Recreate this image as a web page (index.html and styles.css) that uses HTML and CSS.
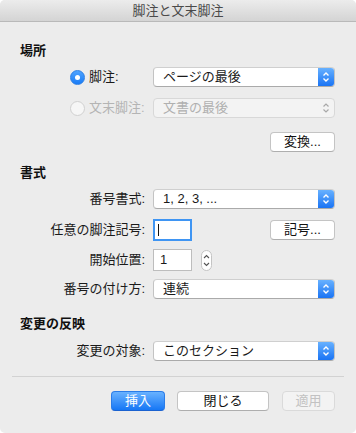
FILE: index.html
```html
<!DOCTYPE html>
<html lang="ja">
<head>
<meta charset="utf-8">
<title>脚注と文末脚注</title>
<link rel="stylesheet" href="styles.css">
</head>
<body>
<div class="window">
  <div class="titlebar">脚注と文末脚注</div>
  <div class="content">
    <h2 class="heading h-place">場所</h2>
    <div class="row r1">
      <div class="label radio-label"><span class="radio on"></span><span>脚注:</span></div>
      <div class="popup"><span class="ptext">ページの最後</span><span class="arrows"><svg width="8" height="12" viewBox="0 0 8 12"><path d="M1.5 4.5 L4 2 L6.5 4.5 M1.5 7.5 L4 10 L6.5 7.5" fill="none" stroke="#fff" stroke-width="1.4"/></svg></span></div>
    </div>
    <div class="row r2">
      <div class="label radio-label disabled"><span class="radio"></span><span>文末脚注:</span></div>
      <div class="popup disabled"><span class="ptext">文書の最後</span><span class="arrows"><svg width="8" height="12" viewBox="0 0 8 12"><path d="M1.5 4.5 L4 2 L6.5 4.5 M1.5 7.5 L4 10 L6.5 7.5" fill="none" stroke="#a8a8a8" stroke-width="1.2"/></svg></span></div>
    </div>
    <div class="row r3">
      <div class="label"></div>
      <div class="right"><button class="btn w65">変換...</button></div>
    </div>

    <h2 class="heading h-format">書式</h2>
    <div class="row r4">
      <div class="label">番号書式:</div>
      <div class="popup"><span class="ptext">1, 2, 3, ...</span><span class="arrows"><svg width="8" height="12" viewBox="0 0 8 12"><path d="M1.5 4.5 L4 2 L6.5 4.5 M1.5 7.5 L4 10 L6.5 7.5" fill="none" stroke="#fff" stroke-width="1.4"/></svg></span></div>
    </div>
    <div class="row r5">
      <div class="label">任意の脚注記号:</div>
      <div class="split">
        <div class="field focus"><span class="caret"></span></div>
        <button class="btn w65">記号...</button>
      </div>
    </div>
    <div class="row r6">
      <div class="label">開始位置:</div>
      <div class="inline">
        <div class="field">1</div>
        <div class="stepper"><svg width="11" height="21" viewBox="0 0 11 21"><path d="M3 8 L5.5 5.5 L8 8 M3 13 L5.5 15.5 L8 13" fill="none" stroke="#555" stroke-width="1.1"/></svg></div>
      </div>
    </div>
    <div class="row r7">
      <div class="label">番号の付け方:</div>
      <div class="popup"><span class="ptext">連続</span><span class="arrows"><svg width="8" height="12" viewBox="0 0 8 12"><path d="M1.5 4.5 L4 2 L6.5 4.5 M1.5 7.5 L4 10 L6.5 7.5" fill="none" stroke="#fff" stroke-width="1.4"/></svg></span></div>
    </div>

    <h2 class="heading h-apply">変更の反映</h2>
    <div class="row r8">
      <div class="label">変更の対象:</div>
      <div class="popup"><span class="ptext">このセクション</span><span class="arrows"><svg width="8" height="12" viewBox="0 0 8 12"><path d="M1.5 4.5 L4 2 L6.5 4.5 M1.5 7.5 L4 10 L6.5 7.5" fill="none" stroke="#fff" stroke-width="1.4"/></svg></span></div>
    </div>

    <div class="separator"></div>

    <div class="actions">
      <button class="btn primary w54">挿入</button>
      <button class="btn w92">閉じる</button>
      <button class="btn disabled-btn w53">適用</button>
    </div>
  </div>
</div>
</body>
</html>
```

FILE: styles.css
```css
* { box-sizing: border-box; }
html, body { margin: 0; padding: 0; background: #ffffff; }
body {
  font-family: "Liberation Sans", "Noto Sans CJK JP", sans-serif;
  font-size: 13px;
  color: #1a1a1a;
}
.window {
  width: 356px;
  height: 433px;
  background: #ececec;
  border-radius: 5px;
  overflow: hidden;
  display: flex;
  flex-direction: column;
}
.titlebar {
  height: 22px;
  line-height: 21px;
  text-align: center;
  color: #4a4a4a;
  font-size: 13px;
  background: linear-gradient(#ececec, #d4d4d4);
  border-bottom: 1px solid #b9b9b9;
  flex: none;
}
.content {
  display: flex;
  flex-direction: column;
  padding-top: 21px;
}
.heading {
  margin: 0;
  padding-left: 20px;
  font-size: 13px;
  font-weight: bold;
  line-height: 16px;
  height: 16px;
  color: #111;
}
.row {
  display: grid;
  grid-template-columns: 125px 182px;
  column-gap: 8px;
  padding-left: 20px;
  height: 20px;
  align-items: center;
}
.label {
  text-align: right;
  line-height: 16px;
  white-space: nowrap;
}
.radio-label {
  display: flex;
  align-items: center;
  justify-content: flex-start;
  padding-left: 50px;
  gap: 4px;
}
.radio-label.disabled { color: #b4b4b4; }
.radio {
  width: 15px;
  height: 15px;
  border-radius: 50%;
  background: #f6f6f6;
  border: 1px solid #d0d0d0;
  flex: none;
  position: relative;
}
.radio.on {
  background: linear-gradient(#4ea3ff, #1a7cf6);
  border: 1px solid #2b7fe6;
}
.radio.on::after {
  content: "";
  position: absolute;
  left: 4px; top: 4px;
  width: 5px; height: 5px;
  border-radius: 50%;
  background: #fff;
}
.popup {
  height: 20px;
  background: #fff;
  border: 1px solid #c3c3c3;
  border-top-color: #cfcfcf;
  border-bottom-color: #aaa;
  border-radius: 4px;
  display: flex;
  align-items: center;
  overflow: hidden;
}
.ptext {
  flex: 1;
  padding-left: 9px;
  line-height: 16px;
  white-space: nowrap;
}
.arrows {
  width: 16px;
  height: 100%;
  background: linear-gradient(#67b1ff, #1a74f4);
  display: flex;
  align-items: center;
  justify-content: center;
  flex: none;
}
.popup.disabled {
  background: #f3f3f3;
  border-color: #d8d8d8;
  color: #b0b0b0;
}
.popup.disabled .arrows { background: transparent; }
.right { display: flex; justify-content: flex-end; }
.btn {
  height: 20px;
  font-family: inherit;
  font-size: 13px;
  line-height: 16px;
  padding: 0;
  color: #111;
  background: #fff;
  border: 1px solid #c4c4c4;
  border-bottom-color: #aeaeae;
  border-radius: 4px;
}
.w65 { width: 65px; }
.w54 { width: 54px; }
.w92 { width: 92px; }
.w53 { width: 53px; }
.btn.primary {
  color: #fff;
  background: linear-gradient(#69b2ff, #1677f5);
  border-color: #2a7ce8;
  border-bottom-color: #1a62d0;
}
.btn.disabled-btn {
  color: #c2c2c2;
  background: #f3f3f3;
  border-color: #dadada;
}
.split {
  display: flex;
  justify-content: space-between;
  align-items: center;
}
.inline {
  display: flex;
  align-items: center;
  gap: 9px;
}
.field {
  width: 39px;
  height: 22px;
  background: #fff;
  border: 1px solid #bdbdbd;
  line-height: 20px;
  padding-left: 6px;
  font-size: 13px;
}
.field.focus {
  border: 2px solid #3f95f3;
  padding-left: 3px;
  display: flex;
  align-items: center;
}
.caret {
  width: 1px;
  height: 12px;
  background: #111;
}
.stepper {
  width: 11px;
  height: 21px;
  border: 1px solid #c4c4c4;
  border-radius: 6px;
  background: #fff;
  display: flex;
  align-items: center;
  justify-content: center;
  overflow: hidden;
}
.stepper svg { display: block; flex: none; }
.r1 { margin-top: 8px; }
.r2 { margin-top: 11px; }
.r3 { margin-top: 14px; }
.h-format { margin-top: 13px; }
.r4 { margin-top: 8px; }
.r5 { margin-top: 10px; height: 22px; }
.r6 { margin-top: 8px; height: 22px; }
.r7 { margin-top: 8px; }
.h-apply { margin-top: 17px; }
.r8 { margin-top: 9px; }
.separator {
  margin: 15px 12px 0 12px;
  height: 1px;
  background: #d2d2d2;
}
.actions {
  margin-top: 14px;
  display: flex;
  justify-content: flex-end;
  gap: 12px;
  padding-right: 21px;
}
.actions .w92 { margin-right: 1px; }
```
